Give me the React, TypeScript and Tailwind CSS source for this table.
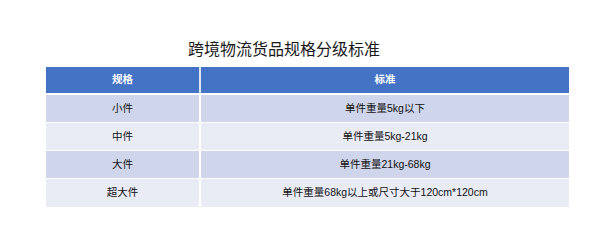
const rows = [
  { size: "小件", rule: "单件重量5kg以下" },
  { size: "中件", rule: "单件重量5kg-21kg" },
  { size: "大件", rule: "单件重量21kg-68kg" },
  { size: "超大件", rule: "单件重量68kg以上或尺寸大于120cm*120cm" },
];

const App = () => {
  return (
    <div
      className="w-[600px] h-[248px] bg-white pt-[39px]"
      style={{ fontFamily: '"Liberation Sans", "Noto Sans CJK SC", sans-serif' }}
    >
      <div className="pl-[188px] text-[16px] leading-[22px] text-[#1a1a1a]">
        跨境物流货品规格分级标准
      </div>
      <div className="ml-[46px] mt-[6px] w-[523px] flex flex-col gap-[1px]">
        <div className="grid grid-cols-[153px_368px] gap-x-[2px] h-[26px] mb-[1px] bg-[#4472c4] text-white font-bold text-[10.5px]">
          <div className="flex items-center justify-center">规格</div>
          <div className="flex items-center justify-center border-l-2 border-[#dfe5f3] -ml-[2px]">标准</div>
        </div>
        {rows.map((row, i) => (
          <div
            key={row.size}
            className={
              "grid grid-cols-[153px_368px] gap-x-[2px] text-[10.5px] text-[#111] " +
              (i === 3 ? "h-[28px] " : "h-[27px] ") +
              (i % 2 === 0 ? "bg-[#cfd5ea]" : "bg-[#e9ebf5]")
            }
          >
            <div className="flex items-center justify-center">{row.size}</div>
            <div className="flex items-center justify-center border-l-2 border-white -ml-[2px]">
              {row.rule}
            </div>
          </div>
        ))}
      </div>
    </div>
  );
};

export default App;
